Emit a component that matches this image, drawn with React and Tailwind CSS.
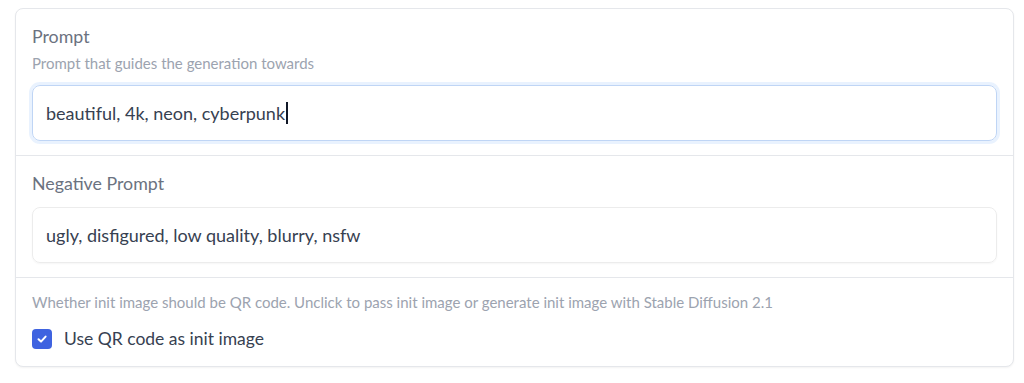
import React from 'react';

const font = { fontFamily: '"Lato", "Open Sans", sans-serif' };

const PromptField = ({ label, info, value, focused }) => (
  <div className="px-4 pt-[15px] pb-[14px]">
    <div className="text-[17.8px] leading-6 text-[#6b7280]">{label}</div>
    {info && <div className="mt-[5px] text-[15px] leading-5 text-[#9ca3af]">{info}</div>}
    <div
      className={
        'mt-3 flex h-[56px] items-center rounded-lg border px-[13px] text-[18px] text-[#374151] ' +
        (focused
          ? 'border-[#bfd5f5] shadow-[0_0_0_3px_rgba(219,234,254,0.6)]'
          : 'border-[#ececec] shadow-[0_1px_2px_rgba(0,0,0,0.04)]')
      }
    >
      <span>{value}</span>
      {focused && <span className="ml-[1px] h-[22px] w-[1.5px] bg-[#111827]" />}
    </div>
  </div>
);

export default function App() {
  return (
    <div className="min-h-screen bg-white pt-[8px] pl-[15px] pr-[10px]" style={font}>
      <div className="w-[999px] overflow-hidden rounded-lg border border-[#e5e7eb] bg-white shadow-[0_1px_2px_rgba(0,0,0,0.05)]">
        <PromptField
          label="Prompt"
          info="Prompt that guides the generation towards"
          value="beautiful, 4k, neon, cyberpunk"
          focused
        />
        <div className="border-t border-[#e5e7eb]">
          <PromptField label="Negative Prompt" value="ugly, disfigured, low quality, blurry, nsfw" />
        </div>
        <div className="border-t border-[#e5e7eb] px-4 pt-[14px] pb-[15px]">
          <div className="text-[15px] leading-5 text-[#9ca3af]">
            Whether init image should be QR code. Unclick to pass init image or generate init image with Stable Diffusion 2.1
          </div>
          <label className="mt-[15px] flex items-center gap-3">
            <span className="flex h-[20px] w-[20px] items-center justify-center rounded-[4px] bg-[#3f63e0]">
              <svg width="12" height="12" viewBox="0 0 12 12" fill="none">
                <path d="M2.5 6.3 L5 8.6 L9.6 3.6" stroke="white" strokeWidth="2" strokeLinecap="round" strokeLinejoin="round" />
              </svg>
            </span>
            <span className="text-[17.5px] leading-6 text-[#374151]">Use QR code as init image</span>
          </label>
        </div>
      </div>
    </div>
  );
}
